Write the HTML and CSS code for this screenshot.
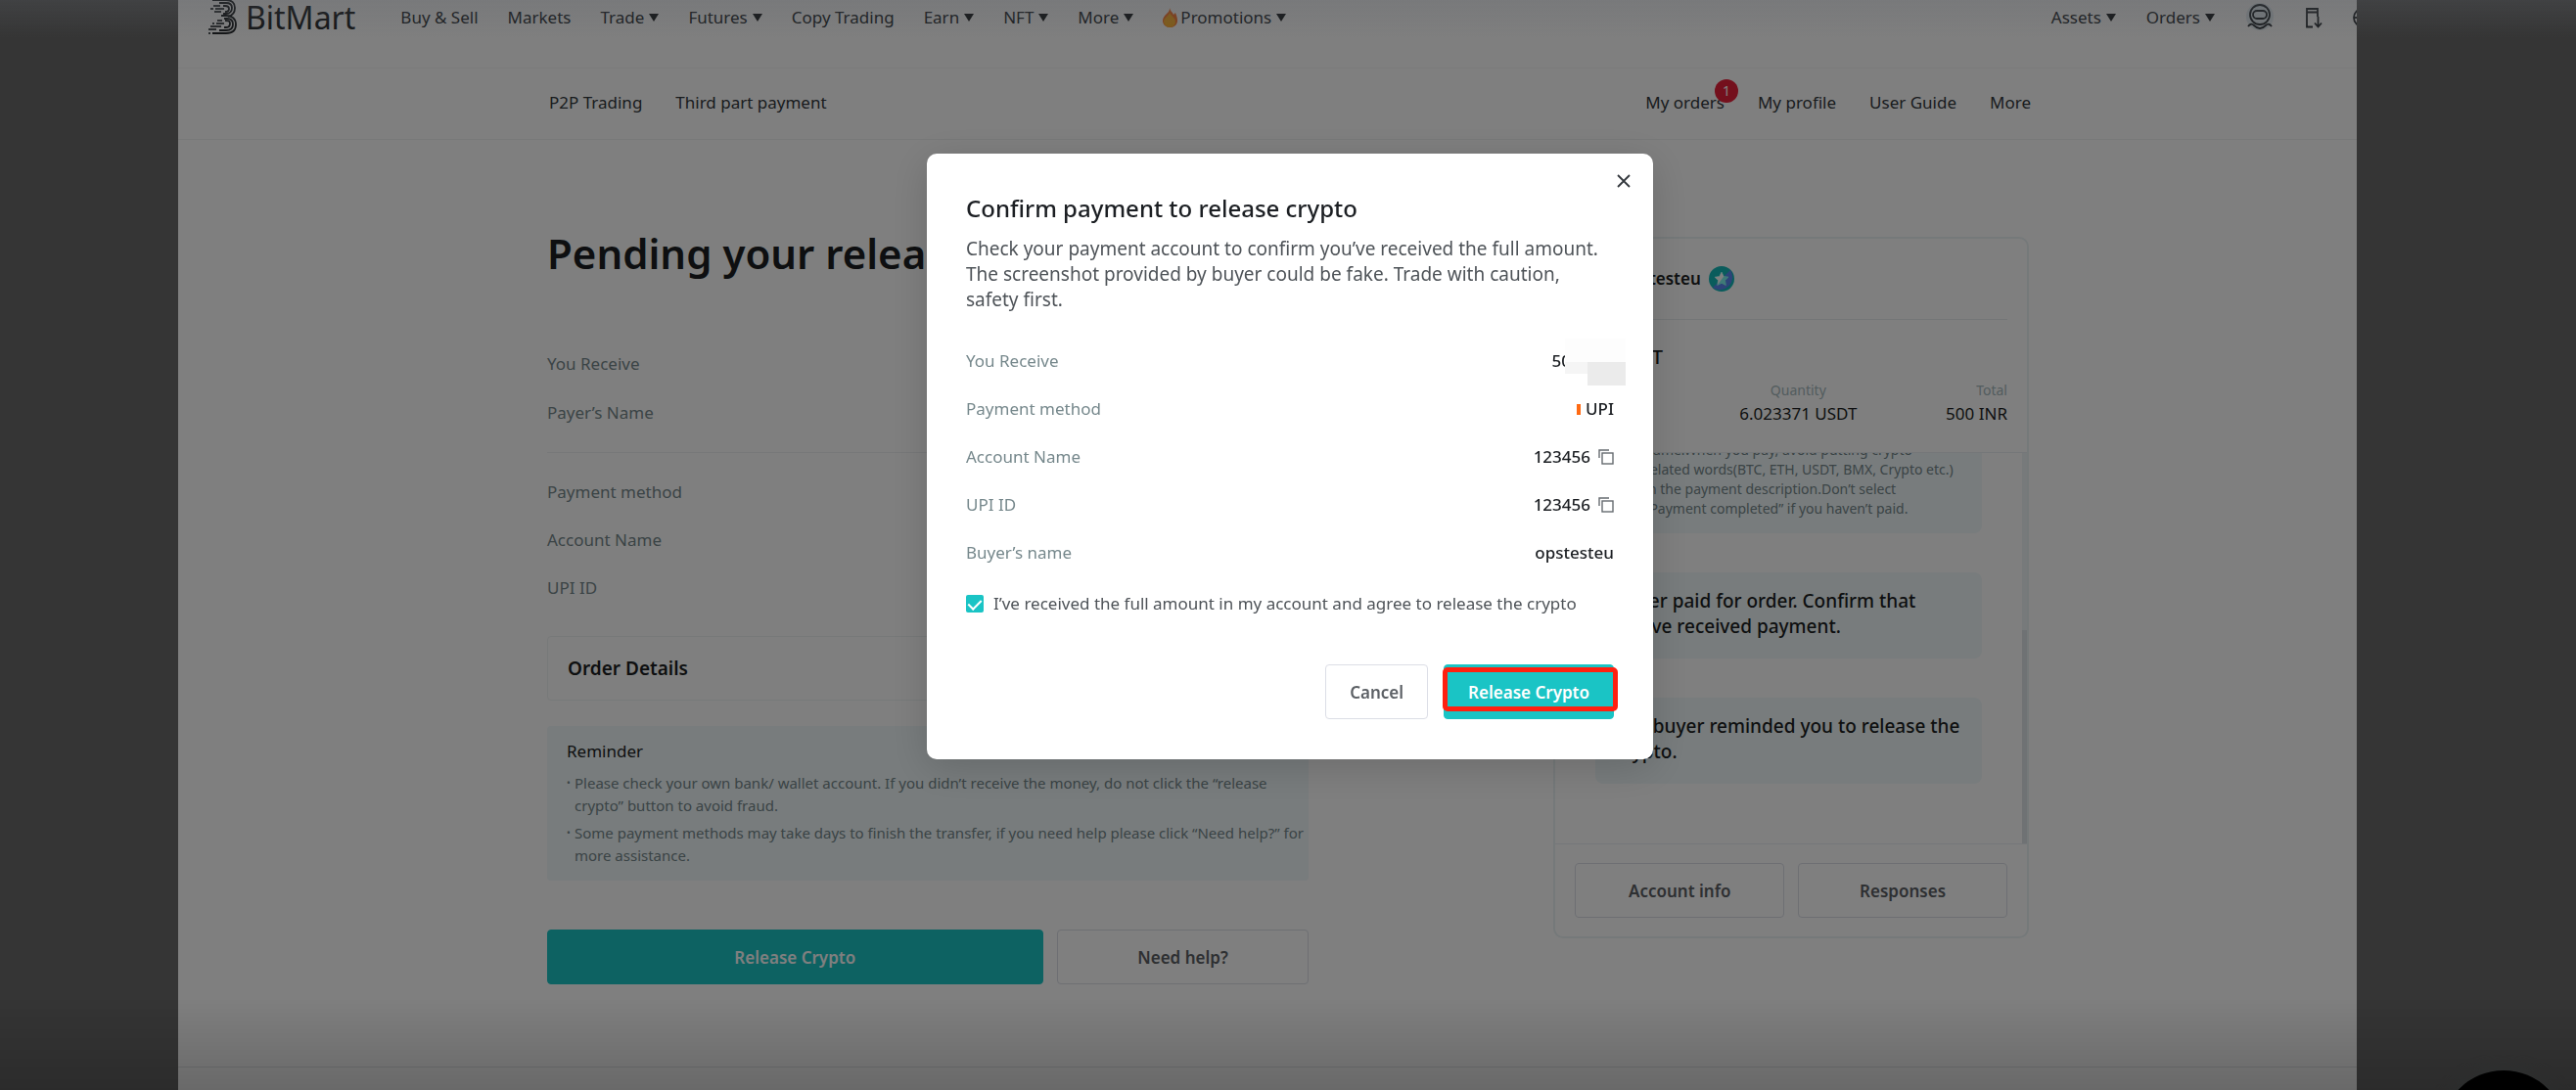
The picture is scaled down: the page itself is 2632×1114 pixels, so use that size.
FILE: index.html
```
<!DOCTYPE html>
<html lang="en">
<head>
    <meta charset="UTF-8">
    <meta name="viewport" content="width=device-width, initial-scale=1.0">
    <title>P2P Trading - BitMart</title>
    <link rel="stylesheet" href="styles.css">
</head>
<body>
    <div class="page">
        <header class="topbar">
            <a href="#" class="logo">
                <svg width="32" height="37" viewBox="0 0 32 37" fill="none" stroke="#24282b" stroke-width="1.8">
                    <path d="M5 1h14c6 0 9 3 9 8s-3 8-7 9"/>
                    <path d="M12 4h7c4 0 6 2 6 5s-2 6-6 6h-3"/>
                    <path d="M16 7h2c3 0 4 1 4 3s-1 3-4 3"/>
                    <path d="M14 17h5c6 0 10 3 10 9s-4 9-10 9H5"/>
                    <path d="M17 20h3c4 0 6 2 6 6s-2 6-7 6h-7"/>
                    <path d="M17 29h2c3 0 4-1 4-4s-2-3-5-3"/>
                    <path d="M6 7h7M3 10h3M8 10h9M7 13h7M10 22h5M5 25h2M9 25h8M3 28h11M1 31h8M1 35h2" stroke="#4c5154"/>
                </svg>
                <span>BitMart</span>
            </a>
            <nav class="topnav">
                <a href="#">Buy &amp; Sell</a>
                <a href="#">Markets</a>
                <a href="#" class="caret">Trade</a>
                <a href="#" class="caret">Futures</a>
                <a href="#">Copy Trading</a>
                <a href="#" class="caret">Earn</a>
                <a href="#" class="caret">NFT</a>
                <a href="#" class="caret">More</a>
                <a href="#" class="caret">
                    <svg class="fire" width="15" height="20" viewBox="0 0 15 20">
                        <path d="M7 0c1 4 3 4 4 7l2-2c1 3 2 5 2 8 0 4-3 7-7.500 7S0 17 0 13c0-3 2-5 4-7 2-2 3-3 3-6z" fill="#ff7a30"/>
                        <path d="M7 5c1 3 6 5 6 9 0 3-2 6-5.500 6S1 17 1 14c0-4 5-5 6-9z" fill="#ffb32e"/>
                    </svg>Promotions</a>
            </nav>
            <nav class="topnav topnav-right">
                <a href="#" class="caret">Assets</a>
                <a href="#" class="caret">Orders</a>
                <a href="#" aria-label="Account">
                    <svg width="30" height="30" viewBox="0 0 30 30" fill="none" stroke="#33383d" stroke-width="1.800">
                        <circle cx="15" cy="14" r="14" fill="#e4edf2" stroke="none"/>
                        <circle cx="15" cy="12" r="10"/>
                        <rect x="8" y="8" width="14" height="8" rx="4"/>
                        <path d="M3 24q3-4 6-1 3 3 6 3t6-3q3-3 6 1"/>
                    </svg>
                </a>
                <a href="#" aria-label="Download app">
                    <svg width="18" height="22" viewBox="0 0 18 22" fill="none" stroke="#33383d" stroke-width="1.800">
                        <path d="M8 20.500H2V2h11v8M2 5.500h11M13.500 10v10M10 16.500l3.500 4 3.500-4"/>
                    </svg>
                </a>
                <a href="#" class="globe" aria-label="Language">
                    <svg width="20" height="20" viewBox="0 0 20 20" fill="none" stroke="#33383d" stroke-width="1.800">
                        <circle cx="10" cy="10" r="9"/>
                        <ellipse cx="10" cy="10" rx="4" ry="9"/>
                        <path d="M1 10h18"/>
                    </svg>
                </a>
            </nav>
        </header>

        <div class="subbar">
            <nav class="subnav">
                <a href="#">P2P Trading</a>
                <a href="#">Third part payment</a>
            </nav>
            <nav class="subnav">
                <a href="#" class="my-orders">My orders<span class="count">1</span></a>
                <a href="#">My profile</a>
                <a href="#">User Guide</a>
                <a href="#">More</a>
            </nav>
        </div>

        <main class="content">
            <section class="order">
                <h1>Pending your release</h1>
                <div class="rows rows-amount">
                    <div class="row"><span>You Receive</span></div>
                    <div class="row"><span>Payer’s Name</span></div>
                </div>
                <div class="rows rows-payment">
                    <div class="row"><span>Payment method</span></div>
                    <div class="row"><span>Account Name</span></div>
                    <div class="row"><span>UPI ID</span></div>
                </div>
                <div class="order-details">Order Details</div>
                <div class="reminder">
                    <h2>Reminder</h2>
                    <ul>
                        <li>Please check your own bank/ wallet account. If you didn’t receive the money, do not click the “release crypto” button to avoid fraud.</li>
                        <li>Some payment methods may take days to finish the transfer, if you need help please click “Need help?” for more assistance.</li>
                    </ul>
                </div>
                <div class="order-buttons">
                    <button class="btn btn-primary" type="button">Release Crypto</button>
                    <button class="btn" type="button">Need help?</button>
                </div>
            </section>

            <aside class="card">
                <div class="card-head">
                    <div class="trader">
                        <span class="avatar"></span>
                        <strong>opstesteu</strong>
                        <svg width="26" height="26" viewBox="0 0 26 26">
                            <circle cx="13" cy="13" r="13" fill="#14b8b8"/>
                            <path d="M22 4a13 13 0 0 1-18 18z" fill="#5b86f0"/>
                            <path d="M13 6l2.200 4.500 4.800.700-3.500 3.400.8 4.900-4.300-2.300-4.300 2.300.8-4.900L6 11.200l4.800-.7z" fill="#7ff5ee" stroke="#7ff5ee" stroke-linejoin="round"/>
                            <path d="M13 6l2.200 4.500L9 19l.5-4.400L6 11.200l4.800-.7z" fill="#fff"/>
                        </svg>
                    </div>
                    <div class="pair">Sell USDT</div>
                    <dl class="figures">
                        <div><dt>Price</dt><dd>83.01 INR</dd></div>
                        <div><dt>Quantity</dt><dd>6.023371 USDT</dd></div>
                        <div><dt>Total</dt><dd>500 INR</dd></div>
                    </dl>
                </div>
                <div class="chat">
                    <div class="bubble bubble-tips">name.When you pay, avoid putting crypto<br>related words(BTC, ETH, USDT, BMX, Crypto etc.)<br>in the payment description.Don’t select<br>“Payment completed” if you haven’t paid.</div>
                    <div class="bubble">Buyer paid for order. Confirm that you’ve received payment.</div>
                    <div class="bubble">The buyer reminded you to release the crypto.</div>
                </div>
                <div class="card-foot">
                    <button class="btn" type="button">Account info</button>
                    <button class="btn" type="button">Responses</button>
                </div>
            </aside>
        </main>
        <footer class="footer"></footer>
    </div>

    <div class="support"></div>

    <div class="backdrop">
        <div class="modal" role="dialog" aria-labelledby="modal-title">
            <button class="close" type="button" aria-label="Close">
                <svg width="14" height="14" viewBox="0 0 14 14" stroke="#33383d" stroke-width="1.800"><path d="M1 1l12 12M13 1L1 13"/></svg>
            </button>
            <h2 id="modal-title">Confirm payment to release crypto</h2>
            <p>Check your payment account to confirm you’ve received the full amount. The screenshot provided by buyer could be fake. Trade with caution, safety first.</p>
            <div class="rows">
                <div class="row"><span>You Receive</span><b class="masked">500 INR</b></div>
                <div class="row"><span>Payment method</span><b><i class="tick"></i>UPI</b></div>
                <div class="row"><span>Account Name</span><b>123456
                    <button class="copy" type="button" aria-label="Copy account name"><svg width="16" height="16" viewBox="0 0 16 16" fill="none" stroke="#666b70" stroke-width="1.400"><path d="M1 9V1h10"/><rect x="4" y="4" width="11" height="11"/></svg></button></b></div>
                <div class="row"><span>UPI ID</span><b>123456
                    <button class="copy" type="button" aria-label="Copy UPI ID"><svg width="16" height="16" viewBox="0 0 16 16" fill="none" stroke="#666b70" stroke-width="1.400"><path d="M1 9V1h10"/><rect x="4" y="4" width="11" height="11"/></svg></button></b></div>
                <div class="row"><span>Buyer’s name</span><b>opstesteu</b></div>
            </div>
            <div class="agree">
                <input type="checkbox" id="agree" checked>
                <label for="agree">I’ve received the full amount in my account and agree to release the crypto</label>
            </div>
            <div class="modal-buttons">
                <button class="btn" type="button">Cancel</button>
                <button class="btn btn-primary highlighted" type="button">Release Crypto</button>
            </div>
        </div>
    </div>
</body>
</html>
```
FILE: styles.css
```
* {
    box-sizing: border-box;
}
body {
    margin: 0;
    background-color: #6a6a6a;
    color: #1c1f23;
    font-family: "Noto Sans", sans-serif;
    font-size: 17px;
    line-height: 24px;
}
a {
    color: #33383d;
    text-decoration: none;
}
h1, h2, p, ul, dl, dd {
    margin: 0;
    padding: 0;
}
svg {
    display: block;
    flex: none;
}
.page {
    margin: 0 224px 0 182px;
    background-color: #fff;
    overflow: hidden;
}

/* top bars */
.topbar {
    display: flex;
    align-items: center;
    height: 70px;
    padding: 0 0 34px 30px;
    border-bottom: 1px solid #f4f5f6;
}
.logo {
    display: flex;
    align-items: center;
    gap: 7px;
    margin-right: 46px;
    color: #24282b;
    font-size: 32px;
}
.topnav, .subnav {
    display: flex;
    align-items: center;
    gap: 30px;
    white-space: nowrap;
}
.topnav a {
    display: flex;
    align-items: center;
}
.topnav-right {
    gap: 31px;
    margin-left: auto;
}
.caret::after {
    content: "";
    margin-left: 5px;
    border: 5px solid transparent;
    border-top: 8px solid #24282b;
    border-bottom: 0;
}
.fire {
    margin-right: 3px;
}
.globe {
    margin-right: -16px;
}
.subbar {
    display: flex;
    justify-content: space-between;
    height: 73px;
    padding: 0 333px 2px 379px;
    border-bottom: 1px solid #eef1f2;
}
.subnav {
    gap: 34px;
}
.my-orders {
    position: relative;
}
.count {
    position: absolute;
    top: -12px;
    right: -14px;
    width: 24px;
    border-radius: 50%;
    background-color: #e8203a;
    color: #fff;
    font-size: 14px;
    text-align: center;
}

/* order */
.content {
    display: grid;
    grid-template-columns: 779fr 486fr;
    gap: 250px;
    align-items: start;
    padding: 88px 335px 84px 377px;
}
h1 {
    margin-bottom: 73px;
    font-size: 42px;
    font-weight: 600;
    line-height: 56px;
}
.rows {
    display: grid;
    gap: 25px;
}
.row {
    display: flex;
    justify-content: space-between;
    color: #76888c;
}
.rows-amount {
    gap: 26px;
    padding-bottom: 28px;
    border-bottom: 1px solid #eef0f2;
}
.rows-payment {
    padding: 28px 0 37px;
}
.order-details {
    padding: 20px;
    border: 1px solid #eef2f3;
    border-radius: 4px;
    font-size: 19px;
    font-weight: 600;
}
.reminder {
    margin: 26px 0 50px;
    padding: 14px 4px 14px 20px;
    border-radius: 4px;
    background-color: #f0f8fa;
}
.reminder h2 {
    margin-bottom: 9px;
    font-size: 17px;
    font-weight: 400;
}
.reminder ul {
    display: grid;
    gap: 5px;
    list-style: none;
    color: #76888c;
    font-size: 15px;
    line-height: 23px;
}
.reminder li {
    display: flex;
}
.reminder li::before {
    content: "•";
    width: 8px;
    flex: none;
    font-size: 10px;
}
.order-buttons {
    display: grid;
    grid-template-columns: 507fr 258fr;
    gap: 14px;
}
.btn {
    height: 56px;
    padding: 0 24px;
    border: 1px solid #dcdee6;
    border-radius: 4px;
    background-color: #fff;
    color: #5c6065;
    font-family: inherit;
    font-size: 17px;
    font-weight: 600;
}
.btn-primary {
    border-color: #1ac4c5;
    background-color: #1ac4c5;
    color: #fff;
}

/* trader card */
.card {
    margin-top: 11px;
    border: 2px solid #ebf3f4;
    border-radius: 10px;
    overflow: hidden;
}
.card-head {
    padding: 0 20px 27px;
    border-bottom: 1px solid #ebeff2;
}
.trader {
    display: flex;
    align-items: center;
    gap: 8px;
    height: 83px;
    border-bottom: 1px solid #e8ecef;
}
.trader strong {
    font-weight: 600;
}
.avatar {
    width: 38px;
    height: 38px;
    border-radius: 50%;
    background-color: #d4dadd;
}
.pair {
    padding: 26px 0 10px;
    font-size: 20px;
    font-weight: 500;
}
.figures {
    display: flex;
    justify-content: space-between;
    text-align: center;
}
.figures dt {
    color: #a5b8bc;
    font-size: 14px;
}
.figures div:last-child {
    text-align: right;
}
.chat {
    position: relative;
    display: flex;
    flex-direction: column;
    justify-content: flex-end;
    gap: 40px;
    height: 399px;
    padding: 0 46px 61px 41px;
    overflow: hidden;
}
.chat::after {
    content: "";
    position: absolute;
    top: 0;
    right: 0;
    bottom: 0;
    width: 5px;
    background: linear-gradient(#eff5f6 181px, #dfe5e9 181px);
}
.bubble {
    padding: 16px 20px 20px;
    border-radius: 8px;
    background-color: #f0f8fa;
    font-size: 19px;
    font-weight: 500;
    line-height: 26px;
}
.bubble-tips {
    padding: 14px 0 15px 50px;
    color: #76888c;
    font-size: 14px;
    font-weight: 400;
    line-height: 20px;
    white-space: nowrap;
}
.card-foot {
    display: grid;
    grid-template-columns: 1fr 1fr;
    gap: 14px;
    padding: 19px 20px;
    border-top: 1px solid #ebeff2;
}
.footer {
    height: 24px;
    border-top: 1px solid #e4e6e8;
}
.support {
    position: fixed;
    right: 10px;
    bottom: -108px;
    width: 128px;
    height: 128px;
    border-radius: 50%;
    background-color: #000;
    box-shadow: 0 0 16px #6a7070;
}

/* modal */
.backdrop {
    position: fixed;
    inset: 0;
    display: flex;
    align-items: flex-start;
    justify-content: center;
    padding: 157px 0 0 4px;
    background:
        linear-gradient(rgba(100, 104, 110, 0.25), transparent 40px),
        linear-gradient(to top, rgba(0, 0, 0, 0.59), rgba(0, 0, 0, 0.5) 94px);
}
.modal {
    position: relative;
    width: 742px;
    padding: 40px 40px 41px;
    border-radius: 10px;
    background-color: #fff;
    box-shadow: 0 8px 40px rgba(0, 0, 0, 0.16);
}
.close, .copy {
    padding: 0;
    border: 0;
    background: none;
}
.close {
    position: absolute;
    top: 21px;
    right: 23px;
}
.modal h2 {
    margin-bottom: 12px;
    font-size: 24px;
    font-weight: 500;
    line-height: 32px;
}
.modal p {
    margin-bottom: 38px;
    color: #4e5358;
    font-size: 19px;
    line-height: 26px;
}
.modal b {
    display: flex;
    align-items: center;
    gap: 8px;
    color: #1c1f23;
    font-weight: 500;
}
.masked {
    position: relative;
}
/* hides the amount */
.masked::after {
    content: "";
    position: absolute;
    top: -11px;
    left: 14px;
    right: -12px;
    height: 48px;
    background:
        linear-gradient(#ebebeb, #ebebeb) right bottom / 39px 24px no-repeat,
        linear-gradient(#f5f5f5, #f5f5f5) left 24px / 26px 12px no-repeat,
        linear-gradient(#fdfdfd, #fdfdfd) left top / 100% 24px no-repeat,
        #fff;
}
.tick {
    width: 4px;
    height: 11px;
    margin-right: -3px;
    background-color: #ff6a13;
}
.agree {
    display: flex;
    align-items: center;
    gap: 10px;
    margin: 28px 0 50px;
    color: #4e5358;
}
.agree input {
    display: flex;
    justify-content: center;
    width: 18px;
    height: 18px;
    margin: 0;
    border-radius: 2px;
    background-color: #1ac4c5;
    appearance: none;
}
.agree input:checked::after {
    content: "";
    width: 6px;
    height: 11px;
    margin-top: 2px;
    border: solid #fff;
    border-width: 0 2px 2px 0;
    transform: rotate(45deg);
}
.modal-buttons {
    display: flex;
    justify-content: flex-end;
    gap: 16px;
}
.highlighted {
    position: relative;
}
.highlighted::after {
    content: "";
    position: absolute;
    inset: 2px -5px 7px -2px;
    border: 5px solid #ff2010;
    border-radius: 5px;
}
```
